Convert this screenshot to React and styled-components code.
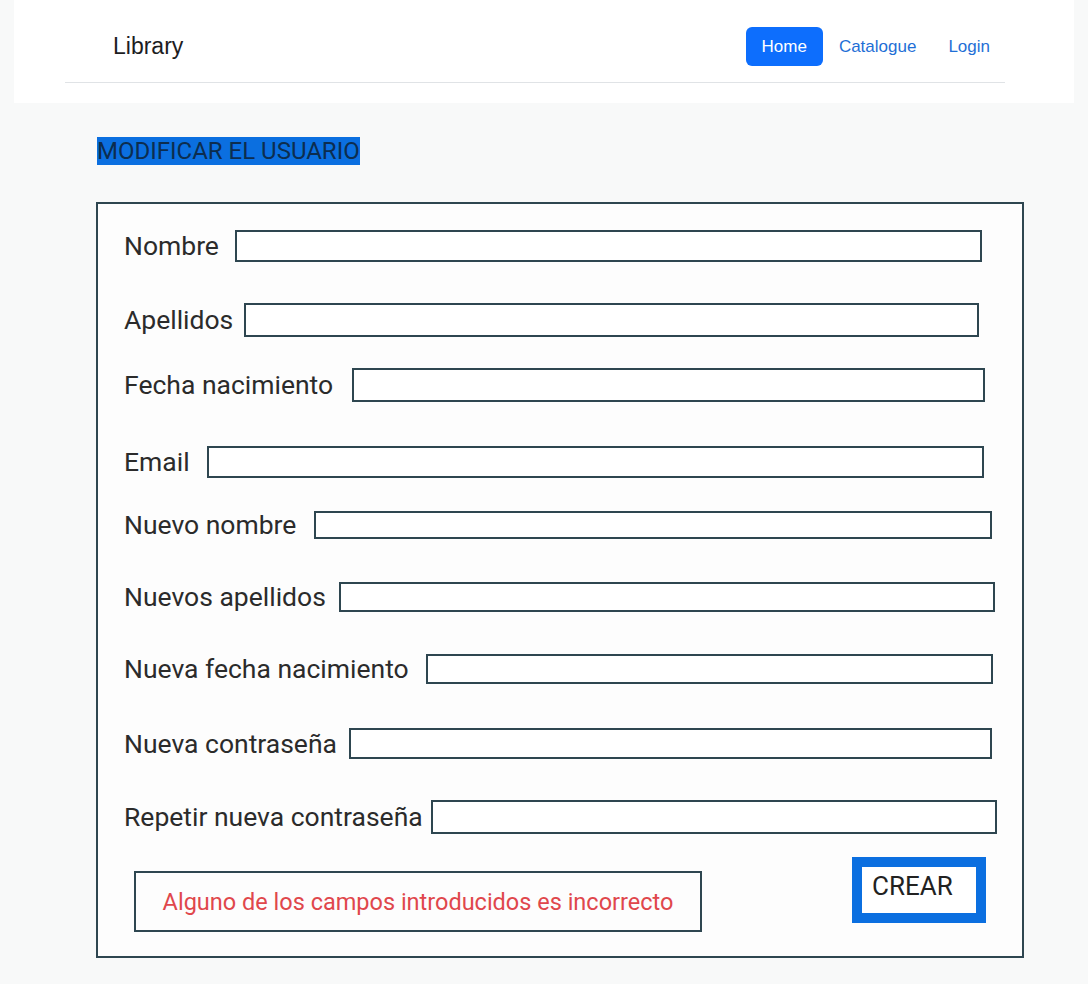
import React from 'react'
import styled, { createGlobalStyle } from 'styled-components'

const GlobalStyle = createGlobalStyle`
    body {
        margin: 0;
        background: #f8f9f9;
        font-family: Roboto, "Liberation Sans", sans-serif;
    }
`;

const Page = styled.div`
    width: 1088px;
    min-height: 984px;
    padding-bottom: 26px;
`;

const Header = styled.header`
    margin: 0 14px;
    width: 1060px;
    height: 103px;
    background: #ffffff;
`;

const NavBar = styled.nav`
    margin-left: 51px;
    width: 940px;
    height: 83px;
    border-bottom: 1px solid #e0e3e6;
    box-sizing: border-box;
    display: flex;
    align-items: center;
    padding: 11px 7px 0 48px;
    font-family: "Liberation Sans", Arial, sans-serif;
`;

const Brand = styled.div`
    font-size: 23px;
    color: #1d1d1f;
    flex: 1;
`;

const NavLink = styled.a`
    display: flex;
    align-items: center;
    height: 39px;
    padding: 0 ${p => (p.$active ? 16 : 8)}px;
    margin-left: ${p => p.$gap || 0}px;
    border-radius: 6px;
    font-size: 17px;
    color: ${p => (p.$active ? '#ffffff' : '#1f6fd6')};
    background: ${p => (p.$active ? '#0d6efd' : 'transparent')};
    text-decoration: none;
`;

const Title = styled.h2`
    margin: 34px 0 0 97px;
    font-size: 24px;
    font-weight: 400;
    line-height: 29px;
    color: #0c2d4f;
`;

const Highlight = styled.span`
    background: #0b6fe0;
`;

const Frame = styled.div`
    margin: 36px 0 0 96px;
    width: 928px;
    box-sizing: border-box;
    border: 2px solid #2e4650;
    background: #fdfdfd;
    padding: 0 0 24px 26px;
`;

const Row = styled.div`
    display: flex;
    align-items: center;
    height: ${p => p.$h}px;
    margin-top: ${p => p.$mt}px;
    margin-right: ${p => p.$mr}px;
`;

const Label = styled.label`
    font-size: 26.5px;
    line-height: 30px;
    color: #2b2b2b;
    white-space: nowrap;
`;

const Input = styled.input`
    flex: 1;
    height: 100%;
    box-sizing: border-box;
    margin-left: ${p => p.$gap}px;
    border: 2px solid #2e4650;
    background: #ffffff;
    outline: none;
`;

const Footer = styled.div`
    display: flex;
    justify-content: space-between;
    align-items: flex-start;
    margin: 23px 36px 0 10px;
`;

const ErrorBox = styled.div`
    margin-top: 14px;
    width: 568px;
    height: 61px;
    box-sizing: border-box;
    border: 2px solid #2e4650;
    display: flex;
    align-items: center;
    justify-content: center;
    font-size: 23.5px;
    color: #e0474c;
`;

const SubmitButton = styled.button`
    width: 134px;
    height: 66px;
    box-sizing: border-box;
    border: 10px solid #0b6fe0;
    background: #ffffff;
    padding: 4px 0 0 10px;
    display: flex;
    align-items: flex-start;
    font-family: Roboto, "Liberation Sans", sans-serif;
    font-size: 26px;
    line-height: 30px;
    color: #222;
`;

const fields = [
    { label: 'Nombre', mt: 26, h: 32, end: 982, gap: 16 },
    { label: 'Apellidos', mt: 41, h: 34, end: 979, gap: 11 },
    { label: 'Fecha nacimiento', mt: 31, h: 34, end: 985, gap: 19 },
    { label: 'Email', mt: 44, h: 32, end: 984, gap: 17 },
    { label: 'Nuevo nombre', mt: 33, h: 28, end: 992, gap: 18 },
    { label: 'Nuevos apellidos', mt: 43, h: 30, end: 995, gap: 13 },
    { label: 'Nueva fecha nacimiento', mt: 42, h: 30, end: 993, gap: 17 },
    { label: 'Nueva contraseña', mt: 44, h: 31, end: 992, gap: 12 },
    { label: 'Repetir nueva contraseña', mt: 41, h: 34, end: 997, gap: 8 },
]

export default function App() {
    return (
        <Page>
            <GlobalStyle />
            <Header>
                <NavBar>
                    <Brand>Library</Brand>
                    <NavLink href="#" $active>Home</NavLink>
                    <NavLink href="#" $gap={8}>Catalogue</NavLink>
                    <NavLink href="#" $gap={16}>Login</NavLink>
                </NavBar>
            </Header>
            <Title><Highlight>MODIFICAR EL USUARIO</Highlight></Title>
            <Frame>
                {
                    fields.map((f, index) => (
                        <Row key={`field${index}`} $mt={f.mt} $h={f.h} $mr={Math.max(0, 1022 - f.end)}>
                            <Label>{f.label}</Label>
                            <Input $gap={f.gap} />
                        </Row>
                    ))
                }
                <Footer>
                    <ErrorBox>Alguno de los campos introducidos es incorrecto</ErrorBox>
                    <SubmitButton>CREAR</SubmitButton>
                </Footer>
            </Frame>
        </Page>
    )
}
